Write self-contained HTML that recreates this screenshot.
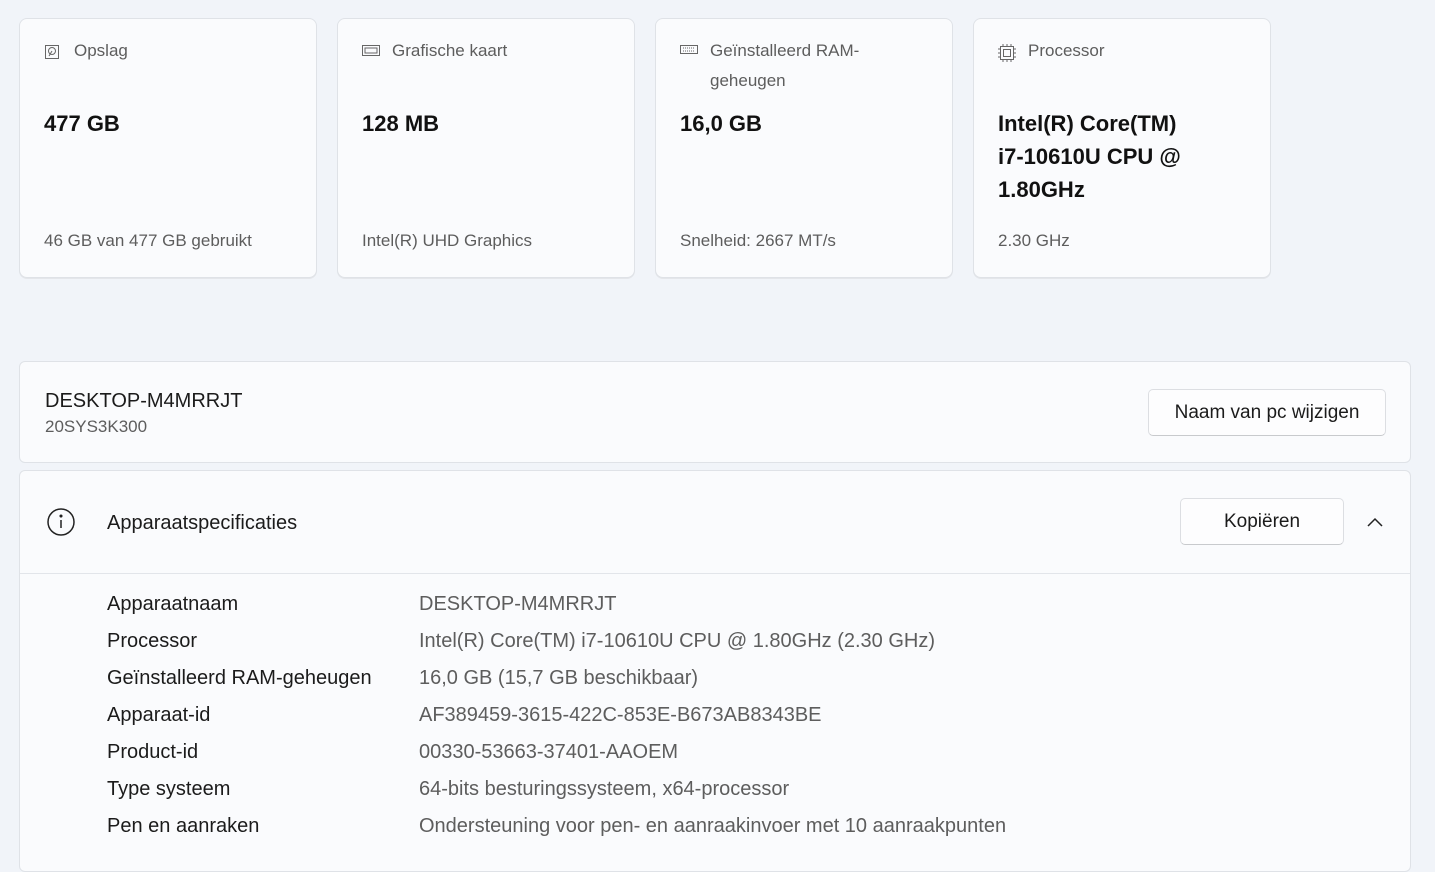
<!DOCTYPE html>
<html><head><meta charset="utf-8"><style>
body{margin:0;width:1435px;height:844px;overflow:hidden;background:#f1f4f9;font-family:"Segoe UI","Liberation Sans",sans-serif;color:#1b1b1b;position:relative}
.card{position:absolute;top:18px;width:296px;height:258px;background:#fafbfd;border:1px solid #dfe2e7;border-radius:8px;box-shadow:0 1px 0 #e4e6ea}
.t{position:absolute;left:54px;top:17px;font-size:17px;color:#5d5d5d;line-height:30px;width:220px}
.ic{position:absolute;left:24px;top:25px}
.v{position:absolute;left:24px;top:88px;font-size:22px;font-weight:600;line-height:33px;color:#111}
.s{position:absolute;left:24px;top:212px;font-size:17px;color:#5d5d5d}
.panel{position:absolute;left:19px;width:1390px;background:#fafbfd;border:1px solid #dfe2e7;border-radius:6px}
.btn{position:absolute;background:#fdfdfe;border:1px solid #dcdee2;border-bottom-color:#c8cacd;border-radius:5px;font-size:19px;text-align:center;color:#1b1b1b}
.row{position:absolute;left:107px;font-size:20px;line-height:24px}
.row span{position:absolute;left:312px;white-space:nowrap;color:#5d5d5d}
.row b{font-weight:normal;white-space:nowrap}
</style></head><body>
<div class="card" style="left:19px">
<svg class="ic" width="16" height="16" viewBox="0 0 16 16" fill="none" stroke="#666" stroke-width="1"><rect x="1.5" y="1.5" width="13" height="13"/><circle cx="8" cy="7" r="3.5"/><path d="M8 7l-3 5"/></svg>
<div class="t">Opslag</div><div class="v">477 GB</div><div class="s">46 GB van 477 GB gebruikt</div></div>
<div class="card" style="left:337px">
<svg class="ic" width="18" height="14" viewBox="0 0 18 14" fill="none" stroke="#666"><rect x="0.5" y="1.5" width="17" height="10"/><rect x="3" y="4" width="12" height="5"/></svg>
<div class="t">Grafische kaart</div><div class="v">128 MB</div><div class="s">Intel(R) UHD Graphics</div></div>
<div class="card" style="left:655px">
<svg class="ic" width="18" height="12" viewBox="0 0 18 12" fill="none" stroke="#666"><rect x="0.5" y="1.5" width="17" height="8"/><path d="M3 4h12M3 7h12" stroke-dasharray="1 1"/></svg>
<div class="t">Geïnstalleerd RAM-geheugen</div><div class="v">16,0 GB</div><div class="s">Snelheid: 2667 MT/s</div></div>
<div class="card" style="left:973px">
<svg class="ic" width="18" height="18" viewBox="0 0 18 18" fill="none" stroke="#666"><rect x="2.5" y="2.5" width="13" height="13"/><rect x="5.5" y="5.5" width="7" height="7"/><path d="M0 5h2M0 9h2M0 13h2M16 5h2M16 9h2M16 13h2M5 0v2M9 0v2M13 0v2M5 16v2M9 16v2M13 16v2"/></svg>
<div class="t">Processor</div><div class="v">Intel(R) Core(TM)<br>i7-10610U CPU @<br>1.80GHz</div><div class="s">2.30 GHz</div></div>

<div class="panel" style="top:361px;height:100px">
<div style="position:absolute;left:25px;top:28px;font-size:20px">DESKTOP-M4MRRJT</div>
<div style="position:absolute;left:25px;top:55px;font-size:17px;color:#5d5d5d">20SYS3K300</div>
<div class="btn" style="left:1128px;top:27px;width:236px;height:45px;line-height:45px">Naam van pc wijzigen</div>
</div>
<div class="panel" style="top:470px;height:400px">
<svg style="position:absolute;left:26px;top:36px" width="30" height="30" viewBox="0 0 30 30" fill="none" stroke="#222" stroke-width="1.5"><circle cx="15" cy="15" r="13"/><path d="M15 13v8"/><circle cx="15" cy="9" r="0.8" fill="#222"/></svg>
<div style="position:absolute;left:87px;top:41px;font-size:20px">Apparaatspecificaties</div>
<div class="btn" style="left:1160px;top:27px;width:162px;height:45px;line-height:46px">Kopiëren</div>
<svg style="position:absolute;left:1346px;top:45px" width="18" height="12" viewBox="0 0 18 12" fill="none" stroke="#222" stroke-width="1.5"><path d="M2 10l7-7 7 7"/></svg>
<div style="position:absolute;left:0;right:0;top:102px;border-top:1px solid #e2e5ea"></div>
</div>
<div class="row" style="top:592px"><b>Apparaatnaam</b><span>DESKTOP-M4MRRJT</span></div>
<div class="row" style="top:629px"><b>Processor</b><span>Intel(R) Core(TM) i7-10610U CPU @ 1.80GHz (2.30 GHz)</span></div>
<div class="row" style="top:666px"><b>Geïnstalleerd RAM-geheugen</b><span>16,0 GB (15,7 GB beschikbaar)</span></div>
<div class="row" style="top:703px"><b>Apparaat-id</b><span>AF389459-3615-422C-853E-B673AB8343BE</span></div>
<div class="row" style="top:740px"><b>Product-id</b><span>00330-53663-37401-AAOEM</span></div>
<div class="row" style="top:777px"><b>Type systeem</b><span>64-bits besturingssysteem, x64-processor</span></div>
<div class="row" style="top:814px"><b>Pen en aanraken</b><span>Ondersteuning voor pen- en aanraakinvoer met 10 aanraakpunten</span></div>
</body></html>
